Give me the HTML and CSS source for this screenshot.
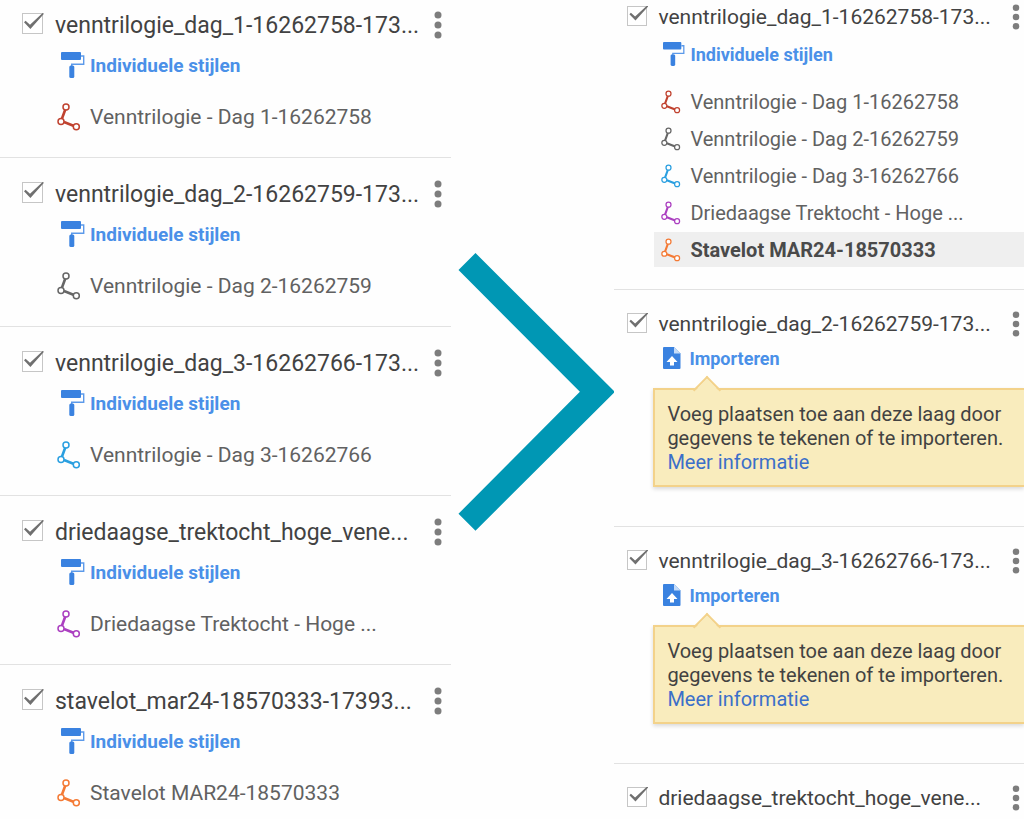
FILE: index.html
```html
<!DOCTYPE html>
<html lang="nl">

<head>
    <meta charset="UTF-8">
    <meta name="viewport" content="width=device-width, initial-scale=1.0">
    <title>Kaartlagen samenvoegen</title>
    <link rel="stylesheet" href="styles.css">
</head>

<body>
    <!-- Shared icons -->
    <svg class="sprite" aria-hidden="true">
        <symbol id="icon-roller" viewBox="0 0 24 26">
            <rect x="0" y="0" width="20" height="8" rx="1" fill="#3a82e0" />
            <path d="M20 4h2.700v8.300H10.700V15" fill="none" stroke="#5c9aea" stroke-width="1.400" />
            <rect x="8.300" y="13.500" width="5" height="12.500" rx="1.500" fill="#3a82e0" />
        </symbol>
        <symbol id="icon-line" viewBox="0 0 24 28">
            <path d="M8.300 6.500L5 15.500M7 19l10 4" fill="none" stroke="currentColor" stroke-width="2.600" />
            <g fill="#fff" stroke="currentColor" stroke-width="1.500">
                <circle cx="9" cy="4" r="3" />
                <circle cx="4" cy="18.500" r="3" />
                <circle cx="19.300" cy="23.800" r="3" />
            </g>
        </symbol>
        <symbol id="icon-import" viewBox="0 0 18 22">
            <path d="M1 0h10l6.500 6.500V21a1 1 0 0 1-1 1H1a1 1 0 0 1-1-1V1a1 1 0 0 1 1-1z" fill="#3a82e0" />
            <path d="M11 0l6.500 6.500H11z" fill="#c4dbf8" />
            <path d="M9 9l5.500 6H11v3.500H7V15H3.500z" fill="#fff" />
        </symbol>
        <symbol id="icon-more" viewBox="0 0 8 28">
            <g fill="#7d7d7d">
                <circle cx="4" cy="4" r="3.500" />
                <circle cx="4" cy="14" r="3.500" />
                <circle cx="4" cy="24" r="3.500" />
            </g>
        </symbol>
    </svg>

    <main class="comparison">
        <section class="panel panel-before">
            <article class="layer">
                <header class="layer-header">
                    <input type="checkbox" id="before-1" checked>
                    <label for="before-1">venntrilogie_dag_1-16262758-173...</label>
                    <button type="button" class="more" aria-label="Laagopties"><svg><use href="#icon-more" /></svg></button>
                </header>
                <a href="#" class="action"><svg><use href="#icon-roller" /></svg>Individuele stijlen</a>
                <ul class="features">
                    <li><svg class="red"><use href="#icon-line" /></svg>Venntrilogie - Dag 1-16262758</li>
                </ul>
            </article>

            <article class="layer">
                <header class="layer-header">
                    <input type="checkbox" id="before-2" checked>
                    <label for="before-2">venntrilogie_dag_2-16262759-173...</label>
                    <button type="button" class="more" aria-label="Laagopties"><svg><use href="#icon-more" /></svg></button>
                </header>
                <a href="#" class="action"><svg><use href="#icon-roller" /></svg>Individuele stijlen</a>
                <ul class="features">
                    <li><svg class="gray"><use href="#icon-line" /></svg>Venntrilogie - Dag 2-16262759</li>
                </ul>
            </article>

            <article class="layer">
                <header class="layer-header">
                    <input type="checkbox" id="before-3" checked>
                    <label for="before-3">venntrilogie_dag_3-16262766-173...</label>
                    <button type="button" class="more" aria-label="Laagopties"><svg><use href="#icon-more" /></svg></button>
                </header>
                <a href="#" class="action"><svg><use href="#icon-roller" /></svg>Individuele stijlen</a>
                <ul class="features">
                    <li><svg class="blue"><use href="#icon-line" /></svg>Venntrilogie - Dag 3-16262766</li>
                </ul>
            </article>

            <article class="layer">
                <header class="layer-header">
                    <input type="checkbox" id="before-4" checked>
                    <label for="before-4">driedaagse_trektocht_hoge_vene...</label>
                    <button type="button" class="more" aria-label="Laagopties"><svg><use href="#icon-more" /></svg></button>
                </header>
                <a href="#" class="action"><svg><use href="#icon-roller" /></svg>Individuele stijlen</a>
                <ul class="features">
                    <li><svg class="purple"><use href="#icon-line" /></svg>Driedaagse Trektocht - Hoge ...</li>
                </ul>
            </article>

            <article class="layer">
                <header class="layer-header">
                    <input type="checkbox" id="before-5" checked>
                    <label for="before-5">stavelot_mar24-18570333-17393...</label>
                    <button type="button" class="more" aria-label="Laagopties"><svg><use href="#icon-more" /></svg></button>
                </header>
                <a href="#" class="action"><svg><use href="#icon-roller" /></svg>Individuele stijlen</a>
                <ul class="features">
                    <li><svg class="orange"><use href="#icon-line" /></svg>Stavelot MAR24-18570333</li>
                </ul>
            </article>
        </section>

        <svg class="arrow" viewBox="0 0 164 278" aria-hidden="true">
            <path d="M24.500 0L164 139L24.500 278L7.500 261L129 139L7.500 17z" fill="#0097b4" />
        </svg>

        <section class="panel panel-after">
            <article class="layer">
                <header class="layer-header">
                    <input type="checkbox" id="after-1" checked>
                    <label for="after-1">venntrilogie_dag_1-16262758-173...</label>
                    <button type="button" class="more" aria-label="Laagopties"><svg><use href="#icon-more" /></svg></button>
                </header>
                <a href="#" class="action"><svg><use href="#icon-roller" /></svg>Individuele stijlen</a>
                <ul class="features">
                    <li><svg class="red"><use href="#icon-line" /></svg>Venntrilogie - Dag 1-16262758</li>
                    <li><svg class="gray"><use href="#icon-line" /></svg>Venntrilogie - Dag 2-16262759</li>
                    <li><svg class="blue"><use href="#icon-line" /></svg>Venntrilogie - Dag 3-16262766</li>
                    <li><svg class="purple"><use href="#icon-line" /></svg>Driedaagse Trektocht - Hoge ...</li>
                    <li class="selected"><svg class="orange"><use href="#icon-line" /></svg>Stavelot MAR24-18570333</li>
                </ul>
            </article>

            <article class="layer">
                <header class="layer-header">
                    <input type="checkbox" id="after-2" checked>
                    <label for="after-2">venntrilogie_dag_2-16262759-173...</label>
                    <button type="button" class="more" aria-label="Laagopties"><svg><use href="#icon-more" /></svg></button>
                </header>
                <a href="#" class="action import"><svg><use href="#icon-import" /></svg>Importeren</a>
                <div class="callout">
                    Voeg plaatsen toe aan deze laag door<br>
                    gegevens te tekenen of te importeren.<br>
                    <a href="#">Meer informatie</a>
                </div>
            </article>

            <article class="layer">
                <header class="layer-header">
                    <input type="checkbox" id="after-3" checked>
                    <label for="after-3">venntrilogie_dag_3-16262766-173...</label>
                    <button type="button" class="more" aria-label="Laagopties"><svg><use href="#icon-more" /></svg></button>
                </header>
                <a href="#" class="action import"><svg><use href="#icon-import" /></svg>Importeren</a>
                <div class="callout">
                    Voeg plaatsen toe aan deze laag door<br>
                    gegevens te tekenen of te importeren.<br>
                    <a href="#">Meer informatie</a>
                </div>
            </article>

            <article class="layer">
                <header class="layer-header">
                    <input type="checkbox" id="after-4" checked>
                    <label for="after-4">driedaagse_trektocht_hoge_vene...</label>
                    <button type="button" class="more" aria-label="Laagopties"><svg><use href="#icon-more" /></svg></button>
                </header>
            </article>
        </section>
    </main>
</body>

</html>
```
FILE: styles.css
```css
* {
    box-sizing: border-box;
}

body {
    margin: 0;
    background: #fefefe;
    color: #424242;
    font-family: Roboto, "Liberation Sans", sans-serif;
}

.sprite {
    display: none;
}

.comparison {
    display: grid;
    grid-template-columns: 11fr 4fr 10fr;
    align-items: start;
}

.panel {
    min-width: 0;
    white-space: nowrap;
}

.layer {
    padding: 20px 0 24px;
    border-bottom: 1px solid #e2e2e2;
}

.layer:last-child {
    padding-bottom: 0;
    border-bottom: none;
}

.layer-header {
    display: flex;
    align-items: center;
    height: 32px;
    padding-left: 22px;
    font-size: 23px;
}

.layer-header label {
    flex: 1;
    min-width: 0;
}

input[type="checkbox"] {
    position: relative;
    flex: none;
    appearance: none;
    width: 21px;
    height: 21px;
    margin: 0 12px 3px 0;
    border: 1px solid #c6c6c6;
    background: #fff;
}

/* tick runs slightly past the corner of the box */
input[type="checkbox"]:checked::after {
    content: "";
    position: absolute;
    inset: -1px -2px 4px 1px;
    background: #707070;
    clip-path: polygon(0 58%, 8% 49%, 30% 73%, 93% 0, 100% 5%, 32% 100%);
}

.more {
    display: flex;
    flex: none;
    justify-content: center;
    width: 26px;
    padding: 0;
    border: none;
    background: none;
    cursor: pointer;
}

.more svg {
    width: 8px;
    height: 28px;
}

.action {
    display: flex;
    align-items: center;
    height: 24px;
    margin-top: 12px;
    padding-left: 61px;
    color: #4a90e8;
    font-size: 19px;
    font-weight: bold;
    text-decoration: none;
}

.action svg {
    flex: none;
    width: 24px;
    height: 26px;
    margin-right: 5px;
}

.features {
    margin: 24px 0 0;
    padding: 0;
    list-style: none;
    color: #616161;
    font-size: 21px;
}

.features li {
    display: flex;
    align-items: center;
    height: 32px;
    padding-left: 57px;
}

.features svg {
    flex: none;
    width: 24px;
    height: 28px;
    margin-right: 9px;
}

.red {
    color: #c0422f;
}

.gray {
    color: #666;
}

.blue {
    color: #2a9fe0;
}

.purple {
    color: #ab3fc0;
}

.orange {
    color: #f47a35;
}

.panel-before .layer:first-child {
    padding-top: 9px;
}

.arrow {
    width: 100%;
    margin-top: 253px;
}

/* Right panel is drawn a little smaller */
.panel-after .layer:first-child {
    padding: 3px 0 22px;
}

.panel-after .layer-header {
    height: 28px;
    padding-left: 13px;
    font-size: 21px;
}

.panel-after input[type="checkbox"] {
    width: 20px;
    height: 20px;
    margin-right: 11px;
}

.panel-after .more {
    width: 16px;
}

.panel-after .more svg {
    height: 26px;
}

.panel-after .action {
    margin-top: 11px;
    padding-left: 49px;
    font-size: 18px;
}

.panel-after .action svg {
    width: 22px;
    height: 24px;
}

.panel-after .import {
    margin-top: 8px;
}

.panel-after .import svg {
    width: 18px;
    height: 22px;
    margin-right: 8px;
}

.panel-after .features {
    display: grid;
    gap: 2px;
    margin: 18px 0 0 40px;
    font-size: 20px;
}

.panel-after .features li {
    height: 35px;
    padding-left: 7px;
}

.panel-after .features svg {
    width: 20px;
    height: 24px;
}

.panel-after .selected {
    background: #efefef;
    color: #4a4a4a;
    font-weight: bold;
}

.callout {
    position: relative;
    margin: 18px 0 15px 39px;
    padding: 12px 12px 11px;
    border: 2px solid #f3d28a;
    border-right: none;
    background: #f9ecbd;
    box-shadow: 0 2px 4px rgba(0, 0, 0, 0.15);
    font-size: 20px;
    line-height: 24px;
}

.callout::before {
    content: "";
    position: absolute;
    top: -10px;
    left: 42px;
    width: 18px;
    height: 18px;
    border: 2px solid #f3d28a;
    border-right: none;
    border-bottom: none;
    background: linear-gradient(135deg, #f9ecbd 50%, transparent 50%);
    transform: rotate(45deg);
}

.callout a {
    color: #3b6fc9;
    text-decoration: none;
}
```
